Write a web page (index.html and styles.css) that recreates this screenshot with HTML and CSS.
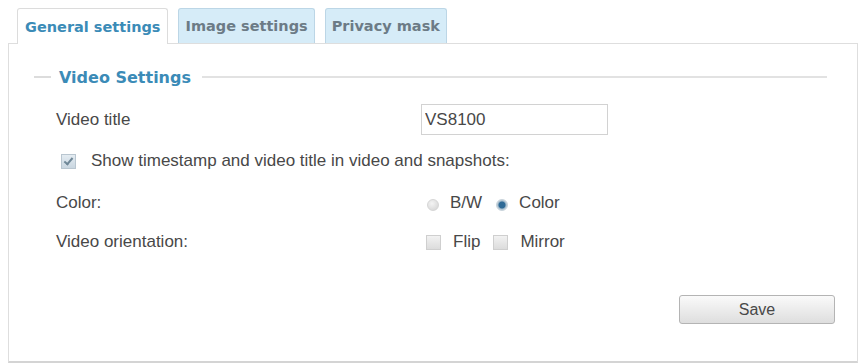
FILE: index.html
```html
<!DOCTYPE html>
<html lang="en">
<head>
<meta charset="UTF-8">
<title>Video settings</title>
<link rel="stylesheet" href="styles.css">
</head>
<body>

<div class="tabs">
    <div class="tab active">General settings</div>
    <div class="tab">Image settings</div>
    <div class="tab">Privacy mask</div>
</div>

<div class="panel">
    <div class="legend">
        <span class="dash"></span>
        <span class="legend-text">Video Settings</span>
        <span class="rule"></span>
    </div>

    <div class="rows">
        <div class="row">
            <div class="label">Video title</div>
            <div class="field"><input class="text-input" type="text" value="VS8100"></div>
        </div>

        <div class="row check-row">
            <span class="box checked"></span>
            <span>Show timestamp and video title in video and snapshots:</span>
        </div>

        <div class="row">
            <div class="label">Color:</div>
            <div class="field">
                <span class="radio"></span><span class="opt">B/W</span>
                <span class="radio on"></span><span class="opt">Color</span>
            </div>
        </div>

        <div class="row">
            <div class="label">Video orientation:</div>
            <div class="field">
                <span class="box"></span><span class="opt">Flip</span>
                <span class="box"></span><span class="opt">Mirror</span>
            </div>
        </div>
    </div>

    <div class="actions">
        <button class="save">Save</button>
    </div>
</div>

</body>
</html>
```

FILE: styles.css
```css
/* Page */
body {
    margin: 0;
    padding: 8px 1px 0 8px;
    background-color: #fff;
    font-family: "Liberation Sans", Arial, sans-serif;
    font-size: 17px;
    color: #484848;
}

/* Tabs */
.tabs {
    display: flex;
    gap: 10px;
    padding-left: 9px;
    height: 35px;
}

.tab {
    display: flex;
    align-items: center;
    padding: 0 6px;
    border: 1px solid #bcd6e6;
    border-bottom: none;
    border-radius: 3px 3px 0 0;
    background-color: #d6ecf8;
    font-family: "DejaVu Sans", Verdana, sans-serif;
    font-weight: bold;
    font-size: 14.5px;
    color: #6c7b86;
}

.tab.active {
    padding: 0 7px;
    background-color: #fff;
    border-color: #dcdcdc;
    color: #3b8bb7;
    position: relative;
    z-index: 1;
    margin-bottom: -1px;
}

/* Panel */
.panel {
    border: 1px solid #dedede;
    border-bottom: 2px solid #d4d4d4;
    padding: 24px 30px 0 25px;
    height: 320px;
    box-sizing: border-box;
}

.legend {
    display: flex;
    align-items: center;
    height: 18px;
}

.dash {
    width: 17px;
    height: 2px;
    background-color: #dcdcdc;
}

.legend-text {
    margin: 0 11px 0 8px;
    font-family: "DejaVu Sans", Verdana, sans-serif;
    font-weight: bold;
    font-size: 16px;
    color: #3b8bb7;
}

.rule {
    flex: 1;
    height: 2px;
    background-color: #e2e2e2;
}

/* Form rows */
.rows {
    padding-left: 22px;
}

.row {
    display: flex;
    align-items: center;
    height: 20px;
}

.row:nth-child(1) {
    height: 31px;
    margin-top: 18px;
}

.row:nth-child(2) { margin-top: 16px; }
.row:nth-child(3) { margin-top: 22px; }
.row:nth-child(4) { margin-top: 19px; }

.label {
    width: 365px;
}

.field {
    display: flex;
    align-items: center;
}

.text-input {
    width: 187px;
    height: 31px;
    box-sizing: border-box;
    border: 1px solid #d2d2d2;
    padding: 0 3px;
    font-family: "Liberation Sans", Arial, sans-serif;
    font-size: 17px;
    color: #484848;
}

.check-row .box {
    margin: 0 15px 0 5px;
}

.opt {
    margin-right: 10px;
}

/* Checkboxes and radios */
.box {
    width: 15px;
    height: 15px;
    box-sizing: border-box;
    border: 1px solid #cfcfcf;
    background: linear-gradient(#f2f2f2, #dcdcdc);
    margin: 0 12px 0 5px;
    position: relative;
}

.box + .opt + .box {
    margin-left: 3px;
}

.box.checked {
    background: linear-gradient(#e4ecf2, #c9d6e0);
    border-color: #b9c6d0;
}

.box.checked::after {
    content: "";
    position: absolute;
    left: 4px;
    top: 1px;
    width: 3px;
    height: 7px;
    border-right: 2px solid #6f8797;
    border-bottom: 2px solid #6f8797;
    transform: rotate(40deg);
}

.radio {
    width: 12px;
    height: 12px;
    box-sizing: border-box;
    border-radius: 50%;
    border: 1px solid #d6d6d6;
    background: radial-gradient(circle at 40% 35%, #f4f4f4, #d2d2d2);
    margin: 4px 11px 0 6px;
    position: relative;
}

.radio.on {
    margin-left: 4px;
    background: radial-gradient(circle, #2f6a96 0 3px, #9fb8ca 4px, #e2e8ec 6px);
    border-color: #c7d2da;
}

/* Save */
.actions {
    display: flex;
    justify-content: flex-end;
    margin: 43px -8px 0 0;
}

.save {
    width: 156px;
    height: 29px;
    border: 1px solid #b4b4b4;
    border-radius: 3px;
    background: linear-gradient(#fafafa, #dedede);
    font-family: "Liberation Sans", Arial, sans-serif;
    font-size: 16px;
    color: #484848;
}
```
